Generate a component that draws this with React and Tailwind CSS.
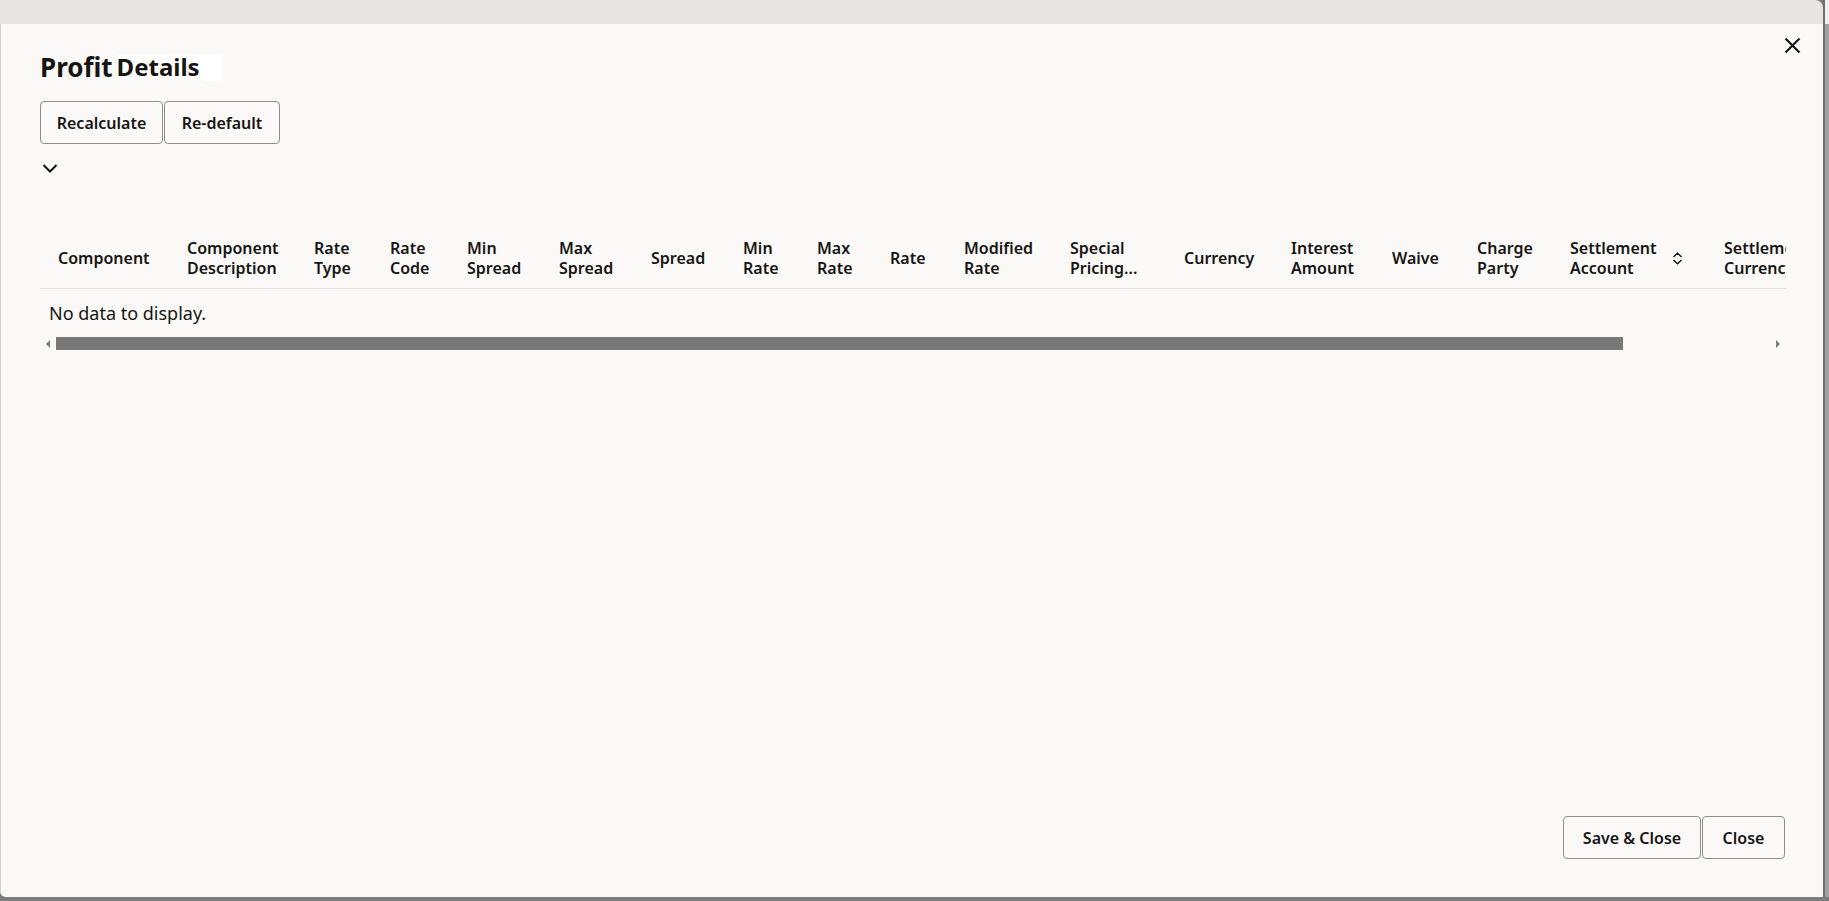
import { useState } from 'react'

const columns = [
  { lines: ['Component'], w: 'w-[129px]' },
  { lines: ['Component', 'Description'], w: 'w-[127px]' },
  { lines: ['Rate', 'Type'], w: 'w-[76px]' },
  { lines: ['Rate', 'Code'], w: 'w-[77px]' },
  { lines: ['Min', 'Spread'], w: 'w-[92px]' },
  { lines: ['Max', 'Spread'], w: 'w-[92px]' },
  { lines: ['Spread'], w: 'w-[92px]' },
  { lines: ['Min', 'Rate'], w: 'w-[74px]' },
  { lines: ['Max', 'Rate'], w: 'w-[73px]' },
  { lines: ['Rate'], w: 'w-[74px]' },
  { lines: ['Modified', 'Rate'], w: 'w-[106px]' },
  { lines: ['Special', 'Pricing...'], w: 'w-[114px]' },
  { lines: ['Currency'], w: 'w-[107px]' },
  { lines: ['Interest', 'Amount'], w: 'w-[101px]' },
  { lines: ['Waive'], w: 'w-[85px]' },
  { lines: ['Charge', 'Party'], w: 'w-[93px]' },
  { lines: ['Settlement', 'Account'], w: 'w-[154px]', sort: true },
  { lines: ['Settlement', 'Currency'], w: 'w-[160px]' }
]

const SortIcon = () => (
  <svg width="11" height="13" viewBox="0 0 11 13" fill="none" stroke="#161513" strokeWidth="1.4">
    <polyline points="1.5,5 5.5,1.2 9.5,5" />
    <polyline points="1.5,8 5.5,11.8 9.5,8" />
  </svg>
)

const OutlineButton = ({ children, className = '' }) => (
  <button
    type="button"
    className={`h-[43px] rounded-[4px] border border-[#8f8e8c] bg-[#faf9f8] text-[16px] font-semibold text-[#161513] ${className}`}
  >
    {children}
  </button>
)

const App = () => {
  const [open] = useState(true)

  return (
    <div className="flex h-[901px] w-full flex-col overflow-hidden bg-[#7c7c7c] font-['Noto_Sans',sans-serif] text-[#161513]">
      <div className="flex h-[897px]">
        <div className="flex w-[1823px] flex-col overflow-hidden rounded-tr-[8px] rounded-bl-[6px]">
          {/* page behind the dialog */}
          <div className="h-[24px] shrink-0 bg-[#e6e5e4]" />

          {open ? (
            <div className="flex flex-1 flex-col border-l border-[#d0d0d0] bg-[#faf9f8] pl-[39px] pr-[38px] pt-[25px] pb-[38px]">
              <div className="flex h-[36px] items-start justify-between">
                <h1 className="flex items-center leading-[36px]">
                  <span className="text-[26px] font-bold">Profit</span>
                  <span className="ml-[4px] bg-white pr-[4px] text-[24px] font-bold leading-[26px]">Details</span>
                  <span className="inline-block h-[27px] w-[19px] bg-white" />
                </h1>
                <button type="button" className="mt-[-12px] mr-[-16px]" aria-label="Close">
                  <svg width="17" height="17" viewBox="0 0 17 17" stroke="#161513" strokeWidth="2.2" fill="none">
                    <line x1="1.5" y1="1.5" x2="15.5" y2="15.5" />
                    <line x1="15.5" y1="1.5" x2="1.5" y2="15.5" />
                  </svg>
                </button>
              </div>

              <div className="mt-[16px] flex gap-[1px]">
                <OutlineButton className="w-[123px]">Recalculate</OutlineButton>
                <OutlineButton className="w-[116px]">Re-default</OutlineButton>
              </div>

              <div className="mt-[19px] h-[11px] pl-[2px]">
                <svg width="16" height="11" viewBox="0 0 16 11" fill="none" stroke="#161513" strokeWidth="2">
                  <polyline points="1.5,2 8,8.5 14.5,2" />
                </svg>
              </div>

              {/* table */}
              <div className="mt-[53px] w-[1746px] overflow-hidden">
                <div className="flex h-[62px] items-center border-b border-[#e3e2e0] pl-[18px]">
                  {columns.map((col) => (
                    <div key={col.lines.join(' ')} className={`${col.w} flex shrink-0 items-center`}>
                      <div className="whitespace-nowrap text-[16px] font-semibold leading-[20px]">
                        {col.lines.map((l) => (
                          <div key={l}>{l}</div>
                        ))}
                      </div>
                      {col.sort ? (
                        <span className="ml-[16px] mt-[2px] flex">
                          <SortIcon />
                        </span>
                      ) : null}
                    </div>
                  ))}
                </div>
                <div className="h-[46px] pl-[9px] pt-[12px] text-[18px] leading-[24px]">No data to display.</div>
                <div className="mt-[2px] flex h-[13px] items-center">
                  <div className="flex w-[16px] justify-center">
                    <span className="ml-[-1px] h-0 w-0 border-y-[4px] border-r-[4px] border-y-transparent border-r-[#7a7a7a]" />
                  </div>
                  <div className="flex-1">
                    <div className="h-[13px] w-[1567px] bg-[#787878]" />
                  </div>
                  <div className="flex w-[16px] justify-center">
                    <span className="h-0 w-0 border-y-[4px] border-l-[4px] border-y-transparent border-l-[#7a7a7a]" />
                  </div>
                </div>
              </div>

              <div className="flex-1" />

              <div className="flex justify-end gap-[1px]">
                <OutlineButton className="w-[138px]">Save &amp; Close</OutlineButton>
                <OutlineButton className="w-[83px]">Close</OutlineButton>
              </div>
            </div>
          ) : null}
        </div>
        <div className="flex w-[6px] flex-col border-l-[2px] border-[#6f6f6f] bg-[#a3a3a3]">
          <div className="h-[24px] bg-[#f0f0f0]" />
        </div>
      </div>
    </div>
  )
}

export default App
